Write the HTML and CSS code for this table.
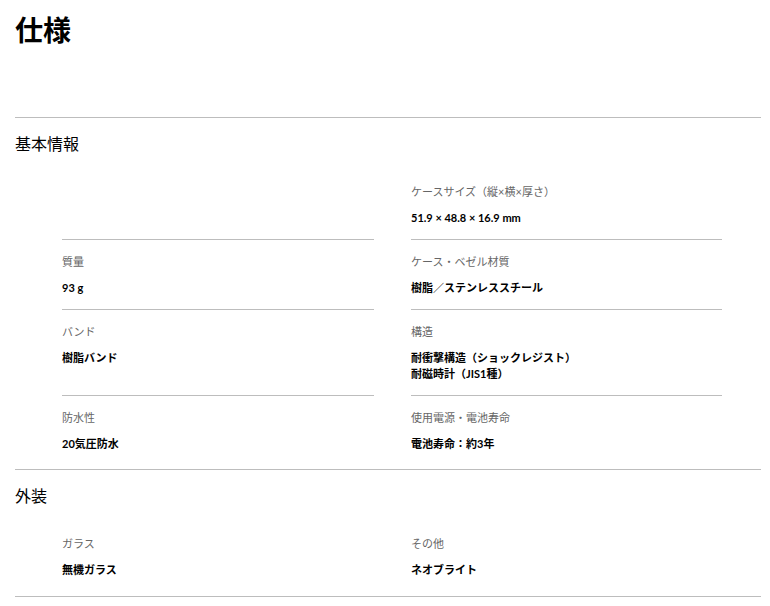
FILE: index.html
```html
<!DOCTYPE html>
<html lang="ja">
<head>
<meta charset="utf-8">
<title>仕様</title>
<link rel="stylesheet" href="styles.css">
</head>
<body>
<main class="spec">
  <h1 class="spec-title">仕様</h1>
  <div class="spec-sections">
    <section class="spec-section">
      <h2 class="spec-heading">基本情報</h2>
      <div class="spec-grid">
        <div class="spec-item spec-item-empty"></div>
        <div class="spec-item">
          <div class="spec-label">ケースサイズ（縦×横×厚さ）</div>
          <div class="spec-value">51.9 × 48.8 × 16.9 mm</div>
        </div>
        <div class="spec-item">
          <div class="spec-label">質量</div>
          <div class="spec-value">93 g</div>
        </div>
        <div class="spec-item">
          <div class="spec-label">ケース・ベゼル材質</div>
          <div class="spec-value">樹脂／ステンレススチール</div>
        </div>
        <div class="spec-item">
          <div class="spec-label">バンド</div>
          <div class="spec-value">樹脂バンド</div>
        </div>
        <div class="spec-item">
          <div class="spec-label">構造</div>
          <div class="spec-value">耐衝撃構造（ショックレジスト）<br>耐磁時計（JIS1種）</div>
        </div>
        <div class="spec-item">
          <div class="spec-label">防水性</div>
          <div class="spec-value">20気圧防水</div>
        </div>
        <div class="spec-item">
          <div class="spec-label">使用電源・電池寿命</div>
          <div class="spec-value">電池寿命：約3年</div>
        </div>
      </div>
    </section>
    <section class="spec-section">
      <h2 class="spec-heading">外装</h2>
      <div class="spec-grid">
        <div class="spec-item">
          <div class="spec-label">ガラス</div>
          <div class="spec-value">無機ガラス</div>
        </div>
        <div class="spec-item">
          <div class="spec-label">その他</div>
          <div class="spec-value">ネオブライト</div>
        </div>
      </div>
    </section>
  </div>
</main>
</body>
</html>
```

FILE: styles.css
```css
html, body {
  margin: 0;
  padding: 0;
  background: #fff;
}

body {
  font-family: "Noto Sans CJK JP", "Noto Sans", sans-serif;
  color: #000;
  padding: 8px 9px 0 15px;
}

.spec-title {
  margin: 0;
  font-size: 28px;
  line-height: 42px;
  font-weight: 700;
}

.spec-sections {
  margin-top: 67px;
  border-top: 1px solid #bdbdbd;
}

.spec-section {
  border-bottom: 1px solid #bdbdbd;
  padding-bottom: 4px;
}

.spec-section:last-child {
  padding-bottom: 5px;
}

.spec-heading {
  margin: 13px 0 15px;
  font-size: 16px;
  line-height: 24px;
  font-weight: 400;
}

.spec-grid {
  display: grid;
  grid-template-columns: 312px 311px;
  column-gap: 37px;
  padding-left: 47px;
}

.spec-item {
  padding: 14px 0 13px;
  border-bottom: 1px solid #bdbdbd;
}

.spec-item:nth-last-child(-n+2) {
  border-bottom: none;
}

.spec-label,
.spec-value {
  font-family: Lato, "Noto Sans CJK JP", sans-serif;
}

.spec-label {
  font-size: 11px;
  line-height: 16px;
  color: #666;
}

.spec-value {
  margin-top: 10px;
  font-size: 11px;
  line-height: 16px;
  font-weight: 700;
  color: #000;
}
```
